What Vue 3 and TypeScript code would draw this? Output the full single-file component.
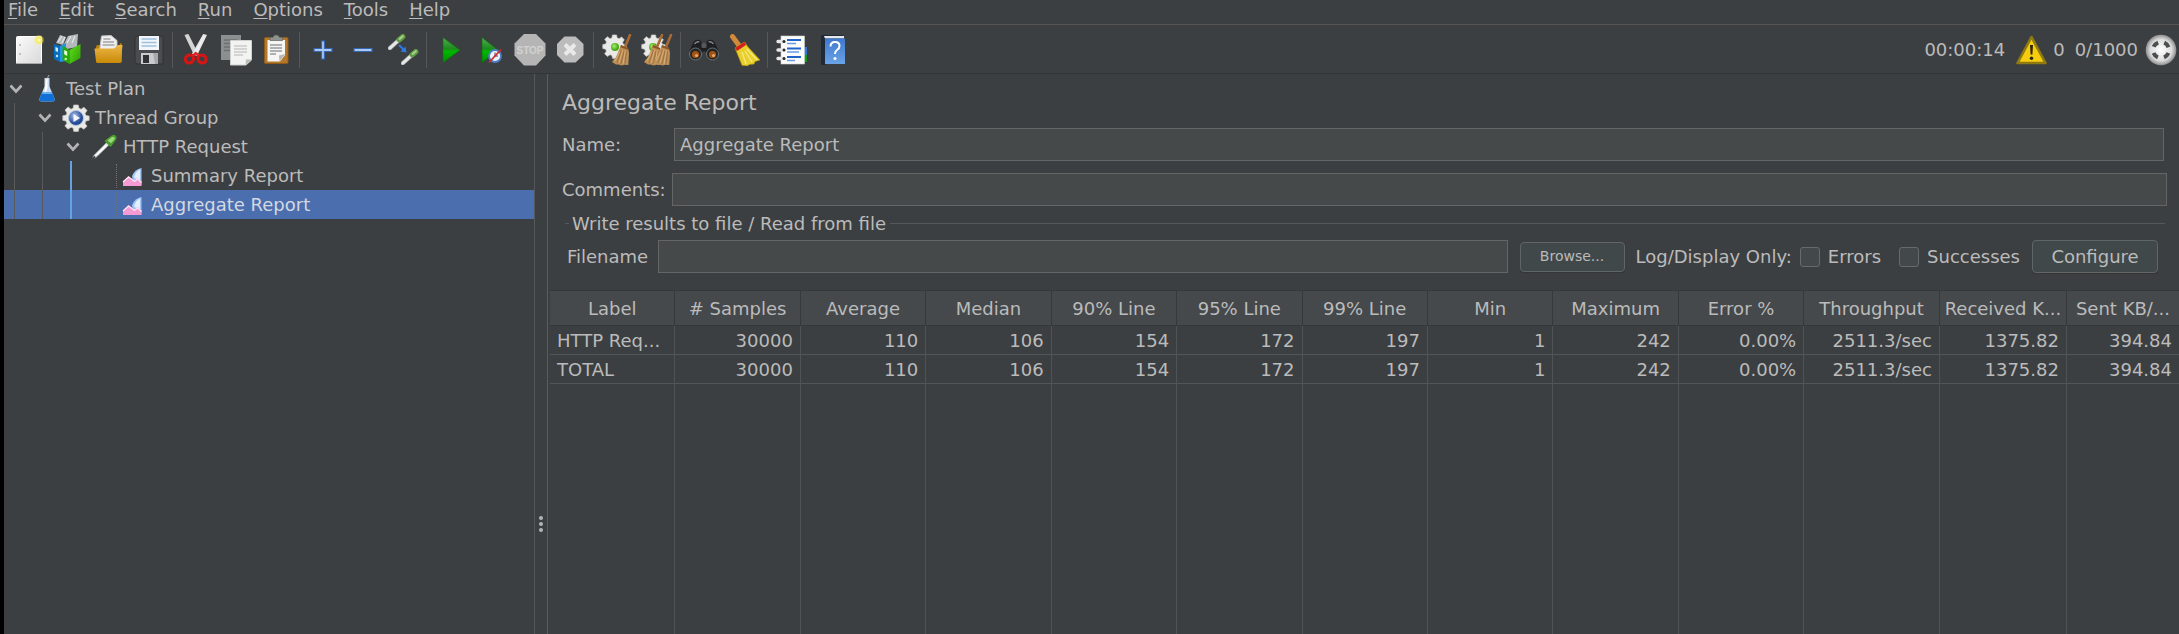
<script setup lang="ts">
import { ref } from 'vue'

interface Column {
  title: string
  width: number
}

interface TreeNode {
  label: string
  level: number
  icon: string
  open: boolean
}

const menus: string[] = ['File', 'Edit', 'Search', 'Run', 'Options', 'Tools', 'Help']

const toolGroups: string[][] = [
  ['new', 'templates', 'open', 'save'],
  ['cut', 'copy', 'paste'],
  ['expand', 'collapse', 'toggle'],
  ['start', 'start-no-pauses', 'stop', 'shutdown'],
  ['clear', 'clear-all'],
  ['search', 'reset-search'],
  ['function-helper', 'help'],
]

const nodes: TreeNode[] = [
  { label: 'Test Plan', level: 0, icon: 'flask', open: true },
  { label: 'Thread Group', level: 1, icon: 'threads', open: true },
  { label: 'HTTP Request', level: 2, icon: 'dropper', open: true },
  { label: 'Summary Report', level: 3, icon: 'report', open: false },
  { label: 'Aggregate Report', level: 3, icon: 'report', open: false },
]
const selected = ref(4)

const columns: Column[] = [
  { title: 'Label', width: 7.7 },
  { title: '# Samples', width: 7.7 },
  { title: 'Average', width: 7.7 },
  { title: 'Median', width: 7.7 },
  { title: '90% Line', width: 7.7 },
  { title: '95% Line', width: 7.7 },
  { title: '99% Line', width: 7.7 },
  { title: 'Min', width: 7.7 },
  { title: 'Maximum', width: 7.7 },
  { title: 'Error %', width: 7.7 },
  { title: 'Throughput', width: 8.33 },
  { title: 'Received K...', width: 7.8 },
  { title: 'Sent KB/...', width: 6.87 },
]

const rows: string[][] = [
  ['HTTP Req...', '30000', '110', '106', '154', '172', '197', '1', '242', '0.00%', '2511.3/sec', '1375.82', '394.84'],
  ['TOTAL', '30000', '110', '106', '154', '172', '197', '1', '242', '0.00%', '2511.3/sec', '1375.82', '394.84'],
]

const name = ref('Aggregate Report')
const comments = ref('')
const filename = ref('')
const errorsOnly = ref(false)
const successesOnly = ref(false)
</script>

<template>
  <div class="app">
    <svg class="sprite" aria-hidden="true">
      <defs>
        <linearGradient id="g-paper" x1="0" y1="0" x2="1" y2="1">
          <stop offset="0" stop-color="#fbfbfb" /><stop offset="1" stop-color="#d9d9d9" />
        </linearGradient>
        <linearGradient id="g-folder" x1="0" y1="0" x2="0" y2="1">
          <stop offset="0" stop-color="#edb646" /><stop offset="1" stop-color="#c88a08" />
        </linearGradient>
        <linearGradient id="g-play" x1="0" y1="0" x2="0" y2="1">
          <stop offset="0" stop-color="#4fae4f" /><stop offset="0.45" stop-color="#1d8a1d" />
          <stop offset="0.55" stop-color="#00b800" /><stop offset="1" stop-color="#008a00" />
        </linearGradient>
        <linearGradient id="g-help" x1="0" y1="0" x2="0" y2="1">
          <stop offset="0" stop-color="#3f78cc" /><stop offset="1" stop-color="#6ba3e6" />
        </linearGradient>
        <linearGradient id="g-twig" x1="0" y1="0" x2="1" y2="1">
          <stop offset="0" stop-color="#c98f52" /><stop offset="1" stop-color="#b8905c" />
        </linearGradient>
        <linearGradient id="g-green" x1="0" y1="0" x2="1" y2="1">
          <stop offset="0" stop-color="#62e01c" /><stop offset="1" stop-color="#2a9a06" />
        </linearGradient>
        <radialGradient id="g-silver">
          <stop offset="0" stop-color="#ffffff" /><stop offset="0.7" stop-color="#dcdcdc" /><stop offset="1" stop-color="#8e8e8e" />
        </radialGradient>
        <radialGradient id="g-sun">
          <stop offset="0" stop-color="#fffde0" /><stop offset="0.45" stop-color="#f7ec5a" /><stop offset="1" stop-color="#f7ec5a" stop-opacity="0" />
        </radialGradient>
        <radialGradient id="g-blue" cx="0.4" cy="0.35">
          <stop offset="0" stop-color="#a9c4ee" /><stop offset="1" stop-color="#244a96" />
        </radialGradient>
        <radialGradient id="g-ball" cx="0.4" cy="0.4">
          <stop offset="0" stop-color="#a6f06a" /><stop offset="1" stop-color="#46a812" />
        </radialGradient>

        <symbol id="gear" viewBox="0 0 28 28">
          <path d="M11.7 1h4.6l.7 3.3 2.1.9L22 3.3l3 3.2-1.9 2.9.9 2.1 3.2.6v4.2l-3.3.8-.9 2.1 2 3-3.1 3-2.9-1.900-2.100.9-.6 3.200h-4.500l-.7-3.300-2.100-.9-3 2-3.100-3.100 2-2.900-.9-2.100L.8 16.300v-4.500l3.300-.7.9-2.100-2-3 3.100-3L9 5.200l2.100-.9z" fill="#e9e9e7" stroke="#c5c5c2" stroke-width=".7" />
        </symbol>
        <symbol id="twig-broom" viewBox="0 0 20 32">
          <path d="M18 1 13 13" stroke="#a86a35" stroke-width="2.600" stroke-linecap="round" />
          <path d="M9 11 16 14l1 5-.7 12-4-.2-2.500.8-3.300-1.200-2.500.2L0 28l4-5z" fill="url(#g-twig)" />
          <path d="M9 11 16 14l.4 2-8-2.800z" fill="#8a5628" />
          <path d="M9.500 16 5 29M12 17 9 30M14.500 17.500l-1.500 12" stroke="#8a6032" stroke-width=".7" fill="none" />
          <path d="M10.700 16 7 29M13.300 17 11 30M7.500 18 3 27" stroke="#e0bd85" stroke-width=".7" fill="none" />
        </symbol>
        <symbol id="dropper" viewBox="0 0 28 28">
          <path d="M16.500 9.500 19 12 6.500 24 2 26.500l2-4.500z" fill="#dfe3e3" stroke="#8d9191" stroke-width=".9" />
          <path d="m8 19.500 8-8 1.200 1.200-9 8.800-3.500 2z" fill="#fff" />
          <path d="M5 23.500 2 26.500" stroke="#2b2d2e" stroke-width="1.400" />
          <path d="m14.500 8 6 6 1.500-1.800 3.500-4.700c1.700-2.200 1.200-3.500.2-4.800-1-1.200-2.800-1.200-4.400.1l-4.800 3.500z" fill="#4a9b2e" />
          <path d="m17.500 7.500 4.200-3.200c1.300-.9 2.200-.8 2.800.1.500.7.3 1.600-.6 2.700l-2.900 3.200z" fill="#9bd878" />
        </symbol>
        <symbol id="small-dropper" viewBox="0 0 20 18">
          <path d="M2 16 12 7" stroke="#8d9191" stroke-width="5" stroke-linecap="round" />
          <path d="M2 16 12 7" stroke="#e6e8e8" stroke-width="3.400" stroke-linecap="round" />
          <path d="m12.500 6.500 4-3.500" stroke="#5f9a44" stroke-width="6" stroke-linecap="round" />
          <path d="m13 5.500 3.500-3" stroke="#a3cf88" stroke-width="2.500" stroke-linecap="round" />
        </symbol>
      </defs>
    </svg>

    <header class="top">
      <nav class="menubar" aria-label="Main menu">
        <button v-for="m in menus" :key="m" type="button" class="menu"><u>{{ m[0] }}</u>{{ m.slice(1) }}</button>
      </nav>

      <div class="toolbar" role="toolbar" aria-label="Tools">
        <div v-for="(group, gi) in toolGroups" :key="gi" class="group">
          <button v-for="t in group" :key="t" type="button" class="tool" :aria-label="t">
            <svg viewBox="0 0 32 32" class="icon" aria-hidden="true">
              <g v-if="t === 'new'">
                <rect x="3.500" y="2.500" width="25" height="27" rx="1" fill="url(#g-paper)" stroke="#fff" />
                <path d="M3 29.500h26" stroke="#a9a9a9" />
                <circle cx="7" cy="11" r="1" fill="#b0b0b0" /><circle cx="7" cy="20" r="1" fill="#b0b0b0" />
                <circle cx="26" cy="6" r="5.500" fill="url(#g-sun)" />
              </g>
              <g v-else-if="t === 'templates'">
                <path d="m3 9 4-8 6 2-3 8zM11 10l4-8 10-2-1 13-10 2z" fill="#b4b9bc" />
                <path d="m5 8 4-6M9 9l3-6M14 9l4-7M19 9l3-7" stroke="#e3e6e8" stroke-width="1.200" />
                <path d="m1 10 6 2v16l-6-3z" fill="#0a6fc0" />
                <path d="m7 12 6-3v18l-6 1z" fill="#2196e6" />
                <path d="m2.500 13 2.500 1v4l-2.500-1z" fill="#d6ecff" />
                <path d="m9.500 12 7 4v14l-7-4z" fill="#2aa70c" />
                <path d="m16.500 16 11-6v14l-11 6z" fill="url(#g-green)" />
                <path d="m11.200 16 3 1.600v4.400l-3-1.700z" fill="#e2ffd6" />
                <circle cx="4" cy="22" r="1.200" fill="#cfe7fb" /><circle cx="12.700" cy="25" r="1.200" fill="#cff5c0" />
              </g>
              <g v-else-if="t === 'open'">
                <path d="M3 13q0-2 2-2h3l2 3h16l1-5q2 0 2 2v16q0 2-2 2H5q-2 0-2-2z" fill="#b97d0a" />
                <path d="m8.500 2 9.500-.5 6 5V17H6.500z" fill="#efefef" stroke="#c2c2c2" />
                <path d="M10.500 5h7M10 8h11M9.500 11h12" stroke="#a5a5a5" stroke-width="1.300" />
                <path d="M1.500 14.500H21L25 11h4.500L28 27q0 2-2 2H5q-2 0-2-2z" fill="url(#g-folder)" />
              </g>
              <g v-else-if="t === 'save'">
                <path d="M2 4q0-2 2-2h24q2 0 2 2v26H4l-2-2z" fill="#4a4d50" stroke="#2f3133" />
                <rect x="6" y="2" width="20" height="14" fill="#f2f6fa" />
                <path d="M8.500 5h15M8.500 8.500h15M8.500 12h15" stroke="#9fbfe0" stroke-width="1.600" />
                <rect x="8" y="19" width="17" height="11" fill="#c9cbcc" />
                <rect x="10" y="21" width="6" height="8" fill="#303336" />
                <path d="M20 19h5v11h-3z" fill="#a7aaab" />
              </g>
              <g v-else-if="t === 'cut'">
                <path d="M5.500 1.500 8 .8l9.500 18.700-3 1z" fill="#d4d6d6" stroke="#d4d6d6" stroke-width="1.400" />
                <path d="M26 1.500 23.500.8 13 19.500l3.500 1.500z" fill="#f0f1f1" stroke="#e4e5e5" stroke-width="1.400" />
                <ellipse cx="9.500" cy="25" rx="4.300" ry="3.800" fill="none" stroke="#d31616" stroke-width="3.200" transform="rotate(-35 9.500 25)" />
                <ellipse cx="22" cy="25" rx="4.300" ry="3.800" fill="none" stroke="#d31616" stroke-width="3.200" transform="rotate(35 22 25)" />
                <path d="m12 21 3.500-3.500L20 21l-2 1.500-2.500-1.800-2 1.800z" fill="#e02222" />
              </g>
              <g v-else-if="t === 'copy'">
                <path d="M1 1h20v25H1z" fill="#8c8f90" />
                <path d="M4 6h13M4 9.500h13M4 13h13M4 16.500h6" stroke="#6e7172" stroke-width="1.300" />
                <path d="M10.500 6.500h21V26L26 31H10.500z" fill="#f3f3f1" stroke="#cfcfcd" />
                <path d="M31.500 25.500 25.500 31l.5-5.500z" fill="#b9b9b7" />
                <path d="M14 12h13M14 15h13M14 18h13M14 21h9" stroke="#b3b5b5" stroke-width="1.200" />
              </g>
              <g v-else-if="t === 'paste'">
                <rect x="4.500" y="3.500" width="23.500" height="26" rx="1" fill="#b5782a" stroke="#8d5a18" />
                <path d="M7.500 6h17.500v15l-5 6.500H7.500z" fill="#f5f5f3" />
                <path d="m25 20-5.500 7.500-.5-6z" fill="#b7b7b5" />
                <path d="M10 11h12M10 14h12M10 17h12M10 20h6" stroke="#999c9c" stroke-width="1.300" />
                <path d="M10 6V3.500h3Q13.500 1 16.200 1T19.500 3.500h3V6.500H10z" fill="#8f918c" stroke="#63655f" stroke-width=".7" />
              </g>
              <path v-else-if="t === 'expand'" d="M14.500 7h3v7.500H25v3h-7.500V25h-3v-7.500H7v-3h7.500z" fill="#a9c8f2" stroke="#3567b5" stroke-width="1.200" />
              <path v-else-if="t === 'collapse'" d="M7 14.500h18v3H7z" fill="#a9c8f2" stroke="#3567b5" stroke-width="1.200" />
              <g v-else-if="t === 'toggle'">
                <use href="#small-dropper" x="1" y="0" width="18" height="16" />
                <use href="#small-dropper" x="14" y="15" width="18" height="16" />
                <path d="m12 11 5 5" stroke="#2f79e6" stroke-width="2" /><path d="m19.500 18.500-6-1 5-5z" fill="#2f79e6" />
              </g>
              <path v-else-if="t === 'start'" d="M9 3.500 26 16 9 28.800z" fill="url(#g-play)" stroke="#0d6a0d" stroke-width=".6" />
              <g v-else-if="t === 'start-no-pauses'">
                <path d="M8 3.500 24 16 8 28.800z" fill="url(#g-play)" stroke="#0d6a0d" stroke-width=".6" />
                <circle cx="21" cy="22" r="6" fill="#eef3fb" stroke="#4c7fc6" stroke-width="1.800" />
                <path d="M21 18.500V22h3" stroke="#444" fill="none" />
                <path d="m15 28.500 12-13" stroke="#d22a2a" stroke-width="1.800" />
              </g>
              <g v-else-if="t === 'stop'">
                <path d="M10 0h12l9.500 9.500v12L22 31.500H10L.5 21.500v-12z" fill="#b5b5b5" />
                <text x="16" y="20" text-anchor="middle" class="stop-word">STOP</text>
              </g>
              <g v-else-if="t === 'shutdown'">
                <path d="M10.500 2.500h11L29.500 10v11l-8 7.500h-11L3 21V10z" fill="#bcbcbc" />
                <path d="m11 10.500 10 10m0-10-10 10" stroke="#e9e9e9" stroke-width="4" />
              </g>
              <g v-else-if="t === 'clear'">
                <use href="#gear" x="1" y="0" width="25" height="25" />
                <circle cx="14" cy="13" r="4" fill="url(#g-ball)" />
                <use href="#twig-broom" x="11" y="0" width="20" height="32" />
              </g>
              <g v-else-if="t === 'clear-all'">
                <use href="#gear" x="0" y="0" width="25" height="25" />
                <circle cx="12" cy="13" r="4" fill="url(#g-ball)" />
                <use href="#twig-broom" x="3" y="0" width="20" height="32" />
                <use href="#twig-broom" x="12" y="0" width="20" height="32" />
              </g>
              <g v-else-if="t === 'search'">
                <path d="M5 9q2-4 7-3l2 3h4l2-3q5-1 7 3l4 9-8 4-7-5-7 5-8-4z" fill="#1d1f20" />
                <path d="M6.500 10q2-3 5-2M25.500 10q-2-3-5-2" stroke="#8a8d8e" stroke-width="1.300" fill="none" />
                <rect x="13.500" y="9" width="5" height="5" rx="1" fill="#54585a" />
                <circle cx="7.500" cy="20" r="6" fill="#232526" stroke="#6e7172" /><circle cx="24.500" cy="20" r="6" fill="#232526" stroke="#6e7172" />
                <circle cx="7.500" cy="20.500" r="3.600" fill="#a35414" /><circle cx="24.500" cy="20.500" r="3.600" fill="#a35414" />
                <circle cx="8.500" cy="21.500" r="1.600" fill="#e9a468" /><circle cx="25.500" cy="21.500" r="1.600" fill="#e9a468" />
              </g>
              <g v-else-if="t === 'reset-search'">
                <path d="m4.500 2.500 6.500 9" stroke="#d08a3c" stroke-width="5" stroke-linecap="round" />
                <path d="m7 14 9.500-6L20 13l12 13-5 1.500-1 2.500-5 .5-1.500 1.500-5.500-.7z" fill="#e9cf2b" stroke="#b29709" stroke-width=".7" />
                <path d="m14 18 4 12M17 17l7 11M19 15l10 11" stroke="#f7ea86" stroke-width="1.200" />
                <path d="m7 14 9.500-6 1.500 3-9 6z" fill="#d21f1f" />
              </g>
              <g v-else-if="t === 'function-helper'">
                <rect x="27" y="13" width="5" height="8" fill="#2f7ad6" /><rect x="27" y="21" width="5" height="7" fill="#159a1d" />
                <rect x="6" y="2" width="23.500" height="28" fill="#fcfcfc" stroke="#d0d0d0" stroke-width=".6" />
                <path d="M12 6h14M12 14.500h14M12 23h14" stroke="#2264c8" stroke-width="1.800" />
                <path d="M12 9.500h9M12 18h12M12 26.500h8" stroke="#6a9ae0" stroke-width="1.500" />
                <path d="M3 7.500h6M3 16h6M3 24.500h6" stroke="#e8e8e8" stroke-width="3.400" stroke-linecap="round" />
                <circle cx="9" cy="7.500" r="1.500" fill="#2b2b2b" /><circle cx="9" cy="16" r="1.500" fill="#2b2b2b" /><circle cx="9" cy="24.500" r="1.500" fill="#2b2b2b" />
              </g>
              <g v-else>
                <path d="M6 3q0-2 2-2h20v4H11v26H6z" fill="#1f2a38" />
                <path d="M9 2h20v2.500H10z" fill="#e6e9ec" />
                <path d="M10 4.500h20V30H10z" fill="url(#g-help)" />
                <path d="M15.500 12.500q0-4.500 4.500-4.500t4.500 4q0 2.500-2.500 4-2 1.200-2 4" fill="none" stroke="#fff" stroke-width="2" />
                <circle cx="20" cy="24.500" r="1.500" fill="#fff" />
              </g>
            </svg>
          </button>
        </div>

        <div class="status">
          <span class="timer">00:00:14</span>
          <button type="button" class="warn" aria-label="Log viewer">
            <svg viewBox="0 0 32 32" class="icon" aria-hidden="true">
              <path d="M16.500 3 30.500 29h-28z" fill="#f5cd0e" stroke="#8f7a12" stroke-width="2.600" stroke-linejoin="round" />
              <path d="M15 11h3l-.6 9.500h-1.800z" fill="#2a2506" /><circle cx="16.500" cy="24.300" r="1.700" fill="#2a2506" />
            </svg>
          </button>
          <span class="errors">0</span>
          <span class="threads">0/1000</span>
          <svg viewBox="0 0 32 32" class="icon" aria-hidden="true">
            <circle cx="16" cy="16" r="15.300" fill="url(#g-silver)" />
            <circle cx="16" cy="16" r="8" fill="none" stroke="#4b4e4f" stroke-width="4" stroke-dasharray="6.300 6.266" stroke-dashoffset="-3.100" />
          </svg>
        </div>
      </div>
    </header>

    <main class="main">
      <ul class="tree" role="tree" aria-label="Test plan tree">
        <li
          v-for="(n, i) in nodes"
          :key="n.label"
          role="treeitem"
          class="node"
          :class="['level-' + n.level, { selected: i === selected }]"
          :aria-level="n.level + 1"
          :aria-selected="i === selected"
          @click="selected = i"
        >
          <span v-for="g in n.level" :key="g" class="guide" :class="{ active: g === 3 }"></span>
          <span class="arrow">
            <svg v-if="n.open" viewBox="0 0 14 10" class="chevron" aria-hidden="true">
              <path d="m1.500 1.500 5.500 6 5.500-6" fill="none" stroke="#b4b4b4" stroke-width="2.600" />
            </svg>
            <span v-else class="leaf"></span>
          </span>
          <svg viewBox="0 0 28 28" class="node-icon" aria-hidden="true">
            <g v-if="n.icon === 'flask'">
              <path d="m14 4 2-4" stroke="#8f9394" stroke-width="1.200" />
              <path d="M11.500 3h5v8.500l5 12q1 3-2 3h-11q-3 0-2-3l5-12z" fill="#c7dcf0" />
              <path d="M13 4h1.500v9L11 22z" fill="#fff" />
              <path d="M9 17.500h10l2.500 6q1 3-2 3h-11q-3 0-2-3z" fill="#1170d8" />
              <path d="M9.500 17.500h9l.6 1.500H9z" fill="#63b0f7" />
            </g>
            <g v-else-if="n.icon === 'threads'">
              <use href="#gear" width="28" height="28" />
              <circle cx="14" cy="14" r="7.500" fill="url(#g-blue)" stroke="#b9c6de" />
              <path d="m11.500 10 6.500 4-6.500 4z" fill="#f4f7fc" />
            </g>
            <use v-else-if="n.icon === 'dropper'" href="#dropper" width="28" height="28" />
            <g v-else>
              <path d="M23.500 6v17h-8L14 14q3-7 9.500-8z" fill="#9fc4f5" />
              <path d="M22 7.500v12l-6-4q1.500-6 6-8z" fill="#e4effd" />
              <path d="M5 19.500 10.500 14l6 4.500 3-2.500 4 3.500V24H5z" fill="#f49bd4" />
              <path d="M5 20 10.500 15l6 4.500 3-2.500 4 3.500" fill="none" stroke="#fde3f4" stroke-width="1.300" />
            </g>
          </svg>
          <span class="node-label">{{ n.label }}</span>
        </li>
      </ul>

      <div class="splitter" role="separator" aria-orientation="vertical"><i></i><i></i><i></i></div>

      <section class="panel">
        <form class="form" @submit.prevent>
          <h1 class="title">Aggregate Report</h1>
          <div class="field name-field">
            <label for="name">Name:</label>
            <input id="name" v-model="name" type="text" class="box" />
          </div>
          <div class="field comments-field">
            <label for="comments">Comments:</label>
            <input id="comments" v-model="comments" type="text" class="box" />
          </div>
          <fieldset class="file">
            <legend>Write results to file / Read from file</legend>
            <div class="file-row">
              <label for="filename" class="filename-label">Filename</label>
              <input id="filename" v-model="filename" type="text" class="box" />
              <button type="button" class="btn browse">Browse...</button>
              <span class="only">Log/Display Only:</span>
              <label class="check"><input v-model="errorsOnly" type="checkbox" />Errors</label>
              <label class="check"><input v-model="successesOnly" type="checkbox" />Successes</label>
              <button type="button" class="btn configure">Configure</button>
            </div>
          </fieldset>
        </form>

        <div class="results">
          <table>
            <colgroup>
              <col v-for="c in columns" :key="c.title" :style="{ width: c.width + '%' }" />
            </colgroup>
            <thead>
              <tr><th v-for="c in columns" :key="c.title" scope="col">{{ c.title }}</th></tr>
            </thead>
            <tbody>
              <tr v-for="r in rows" :key="r[0]" class="row">
                <td v-for="(v, i) in r" :key="i">{{ v }}</td>
              </tr>
              <tr class="rest" aria-hidden="true"><td v-for="c in columns" :key="c.title"></td></tr>
            </tbody>
          </table>
        </div>
      </section>
    </main>
  </div>
</template>

<style>
body {
  background: #3c3f41;
}
</style>

<style scoped>
.app {
  box-sizing: border-box;
  height: 100vh;
  display: flex;
  flex-direction: column;
  overflow: hidden;
  border-left: 4px solid #000;
  background: #3c3f41;
  color: #bbb;
  font: 18px/21px "DejaVu Sans", sans-serif;
}
.app * {
  box-sizing: border-box;
}
button,
input {
  font: inherit;
  color: inherit;
  margin: 0;
}
.sprite {
  position: absolute;
  width: 0;
  height: 0;
}
.menubar {
  display: flex;
  gap: 1px;
  height: 25px;
  padding: 0 0 4px;
  border-bottom: 1px solid #555453;
}
.menu {
  height: 20px;
  padding: 0 10px;
  border: 0;
  background: none;
  line-height: 20px;
}
.menu:first-child {
  padding-left: 4px;
}
.menu u {
  text-decoration-thickness: 1px;
  text-underline-offset: 2px;
}
.toolbar {
  display: flex;
  align-items: center;
  height: 49px;
  padding: 1px 2px 0 5px;
  border-bottom: 1px solid #333638;
}
.group {
  display: flex;
}
.group + .group {
  margin-left: 3px;
  padding-left: 3px;
  border-left: 1px solid #555759;
}
.tool {
  display: flex;
  align-items: center;
  justify-content: center;
  width: 40px;
  height: 36px;
  padding: 0;
  border: 0;
  background: none;
}
.icon {
  display: block;
  flex: none;
  width: 32px;
  height: 32px;
}
.stop-word {
  font: bold 10px "Liberation Sans", sans-serif;
  fill: #d2d2d2;
}
.status {
  display: flex;
  align-items: center;
  margin-left: auto;
}
.timer {
  margin-right: 10px;
}
.warn {
  margin-right: 6px;
  padding: 0;
  border: 0;
  background: none;
}
.threads {
  margin: 0 7px 0 10px;
}
.main {
  flex: 1;
  min-height: 0;
  display: flex;
}
.tree {
  flex: 0 0 531px;
  margin: 0;
  padding: 0;
  list-style: none;
  border-right: 1px solid #55585a;
}
.node {
  display: flex;
  align-items: center;
  height: 29px;
}
.node.selected {
  background: #4b6eaf;
  color: #d4d8e0;
}
.node::before {
  content: "";
  flex: none;
  width: 10px;
}
.level-0::before {
  width: 5px;
}
.guide {
  flex: none;
  align-self: stretch;
  width: 28px;
  border-left: 1px solid #57595b;
}
.guide.active {
  border-left: 2px solid #64a3e2;
}
.arrow {
  flex: none;
  align-self: stretch;
  display: flex;
  align-items: center;
  width: 20px;
}
.level-0 .arrow {
  width: 24px;
}
.chevron {
  flex: none;
  width: 14px;
  height: 10px;
}
.level-1 .chevron,
.level-2 .chevron {
  margin-left: -4px;
}
.leaf {
  width: 100%;
  height: 24px;
  margin-left: 18px;
  border-left: 1px dotted #707274;
}
.node-icon {
  flex: none;
  width: 28px;
  height: 28px;
}
.node-label {
  margin-left: 5px;
  white-space: nowrap;
}
.splitter {
  flex: none;
  width: 12px;
  padding-top: 442px;
  display: flex;
  flex-direction: column;
  align-items: center;
  gap: 2px;
}
.splitter i {
  flex: none;
  width: 4px;
  height: 4px;
  border-radius: 2px;
  background: #b2b4b5;
}
.panel {
  flex: 1;
  min-width: 0;
  display: flex;
  flex-direction: column;
  border-left: 1px solid #5a5d5f;
}
.form {
  padding: 16px 12px 17px 14px;
}
.title {
  margin: 0 0 12px;
  font-size: 22px;
  line-height: 26px;
  font-weight: 400;
}
.field {
  display: flex;
  align-items: center;
}
.name-field {
  margin: 0 3px 12px 0;
}
.name-field label {
  width: 112px;
}
.comments-field {
  gap: 6px;
}
.box {
  flex: 1;
  min-width: 0;
  height: 33px;
  padding: 0 5px;
  border: 1px solid #646666;
  border-radius: 0;
  background: #45494a;
  outline: 0;
}
.file {
  margin: 7px 2px 0 3px;
  padding: 6px 7px 0 2px;
  border: 0;
  border-top: 1px solid #555759;
  min-width: 0;
}
.file legend {
  margin-left: 2px;
  padding: 0 4px 0 3px;
}
.file-row {
  display: flex;
  align-items: center;
}
.filename-label {
  margin-right: 10px;
}
.btn {
  padding: 0;
  border: 1px solid #616566;
  border-radius: 4px;
  background: #41484a;
  box-shadow: 0 1px 1px #333638;
  white-space: nowrap;
}
.browse {
  width: 105px;
  height: 30px;
  margin: 0 11px 0 12px;
  font-size: 14px;
}
.configure {
  width: 126px;
  height: 33px;
}
.only {
  margin-right: 8px;
  white-space: nowrap;
}
.check {
  display: flex;
  align-items: center;
  margin-right: 18px;
}
.check + .check {
  margin-right: 12px;
}
.check input {
  appearance: none;
  width: 20px;
  height: 20px;
  margin: 0 8px 0 0;
  border: 1px solid #676a6b;
  border-radius: 3px;
  background: #43494a;
}
.results {
  flex: 1;
  min-height: 0;
  padding-left: 2px;
}
table {
  width: 100%;
  height: 100%;
  table-layout: fixed;
  border-collapse: separate;
  border-spacing: 0;
}
th {
  height: 36px;
  padding: 0;
  border-right: 1px solid #35393b;
  border-top: 1px solid #35393b;
  border-bottom: 1px solid #35393b;
  background: #45494b;
  font-weight: 400;
  text-align: center;
  white-space: nowrap;
}
td {
  padding: 0 7px;
  border-right: 1px solid #505355;
  text-align: right;
  white-space: nowrap;
}
.row td {
  height: 29px;
  border-bottom: 1px solid #535658;
}
td:first-child {
  text-align: left;
}
th:last-child,
td:last-child {
  border-right: 0;
}
</style>
